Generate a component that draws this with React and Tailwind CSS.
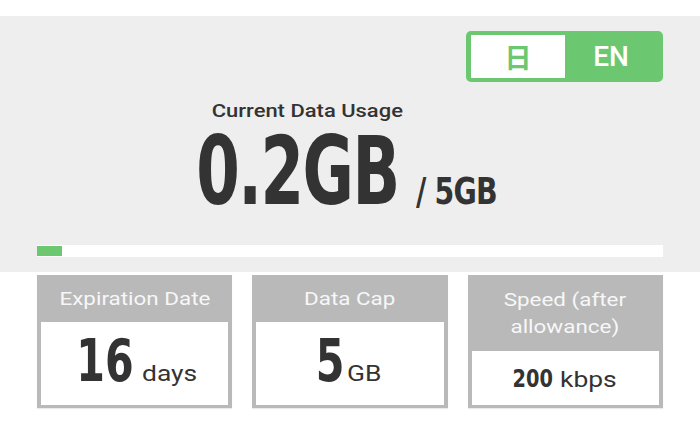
import React from 'react';

const cond = { fontFamily: '"Liberation Sans Narrow", "DejaVu Sans Condensed", sans-serif' };

const InfoCard = ({ label, children, tall }) => (
  <div className="flex flex-col bg-[#b9b9b9] px-[4px] pb-[3px] shadow-[0_1px_1px_rgba(0,0,0,0.08)]">
    <div className={`flex items-center justify-center text-center text-[19px] leading-[27px] text-[#f7f7f7] ${tall ? 'h-[76px]' : 'h-[47px]'}`}>
      <span className="inline-block scale-x-[1.18]">{label}</span>
    </div>
    <div className="flex flex-1 items-center justify-center bg-white">{children}</div>
  </div>
);

const Unit = ({ children, className = '' }) => (
  <span className={`inline-block origin-left scale-x-[1.2] text-[22px] leading-none text-[#333] ${className}`}>{children}</span>
);

export default function App() {
  return (
    <div className="w-[700px] h-[430px] bg-white font-['Roboto',sans-serif] text-[#333]">
      <div className="h-[16px]" />
      <div className="bg-[#eeeeee] h-[256px] px-[37px] pt-[15px] flex flex-col">
        <div className="flex justify-end">
          <div className="flex w-[197px] h-[51px] rounded-[5px] bg-[#6cc870] pl-[5px] py-[4px]">
            <div className="flex w-[94px] items-center justify-center bg-white text-[#6cc870] text-[27px] font-bold font-['Noto_Sans_CJK_JP',sans-serif] leading-none">日</div>
            <div className="flex flex-1 items-center justify-center pr-[6px] text-white text-[28px] font-medium leading-none">EN</div>
          </div>
        </div>
        <div className="mt-[18px] text-center">
          <div className="text-[18px] font-medium leading-[22px] mr-[86px]">
            <span className="inline-block scale-x-[1.22]">Current Data Usage</span>
          </div>
          <div className="flex items-baseline justify-center mt-[14px] mr-[62px] h-[72px]">
            <span style={cond} className="font-bold text-[94px] leading-[72px] tracking-[-2px] inline-block origin-right scale-x-[0.74]">0.2GB</span>
            <span style={cond} className="font-bold text-[38px] ml-[18px] leading-none tracking-[-1px] inline-block origin-left scale-x-[0.83]">/ 5GB</span>
          </div>
        </div>
        <div className="mt-[37px] h-[12px] bg-white">
          <div className="h-[10px] mt-[1px] w-[25px] bg-[#6cc870]" />
        </div>
      </div>
      <div className="mx-[37px] mt-[3px] grid grid-cols-3 gap-[20px] h-[133px]">
        <InfoCard label="Expiration Date">
          <div className="flex items-baseline pb-[6px] pr-[20px]">
            <span style={cond} className="font-bold text-[58px] leading-none inline-block origin-right scale-x-[0.79]">16</span>
            <Unit className="ml-[8px]">days</Unit>
          </div>
        </InfoCard>
        <InfoCard label="Data Cap">
          <div className="flex items-baseline pb-[6px] pr-[16px]">
            <span style={cond} className="font-bold text-[58px] leading-none inline-block origin-right scale-x-[0.79]">5</span>
            <Unit className="ml-[2px]">GB</Unit>
          </div>
        </InfoCard>
        <InfoCard tall label={<>Speed (after<br />allowance)</>}>
          <div className="flex items-baseline pr-[18px]">
            <span style={cond} className="font-bold text-[25px] leading-none inline-block origin-right scale-x-[0.86]">200</span>
            <Unit className="ml-[7px]">kbps</Unit>
          </div>
        </InfoCard>
      </div>
    </div>
  );
}
